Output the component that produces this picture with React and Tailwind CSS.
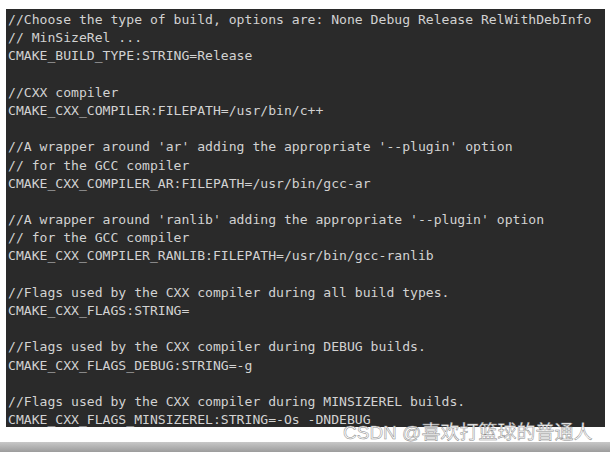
const lines = [
  "//Choose the type of build, options are: None Debug Release RelWithDebInfo",
  "// MinSizeRel ...",
  "CMAKE_BUILD_TYPE:STRING=Release",
  "",
  "//CXX compiler",
  "CMAKE_CXX_COMPILER:FILEPATH=/usr/bin/c++",
  "",
  "//A wrapper around 'ar' adding the appropriate '--plugin' option",
  "// for the GCC compiler",
  "CMAKE_CXX_COMPILER_AR:FILEPATH=/usr/bin/gcc-ar",
  "",
  "//A wrapper around 'ranlib' adding the appropriate '--plugin' option",
  "// for the GCC compiler",
  "CMAKE_CXX_COMPILER_RANLIB:FILEPATH=/usr/bin/gcc-ranlib",
  "",
  "//Flags used by the CXX compiler during all build types.",
  "CMAKE_CXX_FLAGS:STRING=",
  "",
  "//Flags used by the CXX compiler during DEBUG builds.",
  "CMAKE_CXX_FLAGS_DEBUG:STRING=-g",
  "",
  "//Flags used by the CXX compiler during MINSIZEREL builds.",
  "CMAKE_CXX_FLAGS_MINSIZEREL:STRING=-Os -DNDEBUG",
];

export default function App() {
  return (
    <div className="relative w-[610px] h-[452px] bg-white overflow-hidden">
      {/* terminal screenshot */}
      <div className="pt-[9px] pl-[6px] pr-[5px]">
        <div
          className="h-[418px] overflow-hidden bg-[#2a2a2a] text-[#d2d2d2] pl-[2px] pt-[2px] text-[13.1px] leading-[18.2px] whitespace-pre"
          style={{ fontFamily: '"DejaVu Sans Mono", "Liberation Mono", monospace' }}
        >
          {lines.map((line, i) => (
            <div key={i} className="h-[18.2px]">{line}</div>
          ))}
        </div>
      </div>

      {/* bottom bar */}
      <div className="mt-[15px] h-[10px] bg-gradient-to-b from-[#c8c8c8] to-[#9c9c9c]" />

      {/* watermark */}
      <div
        className="absolute left-[343px] top-[421px] text-[19px] leading-[24px] text-white whitespace-nowrap"
        style={{
          fontFamily: '"Liberation Sans", "Noto Sans CJK SC", sans-serif',
          WebkitTextStroke: '0.5px #8a8a8a',
        }}
      >
        CSDN @喜欢打篮球的普通人
      </div>
    </div>
  );
}
